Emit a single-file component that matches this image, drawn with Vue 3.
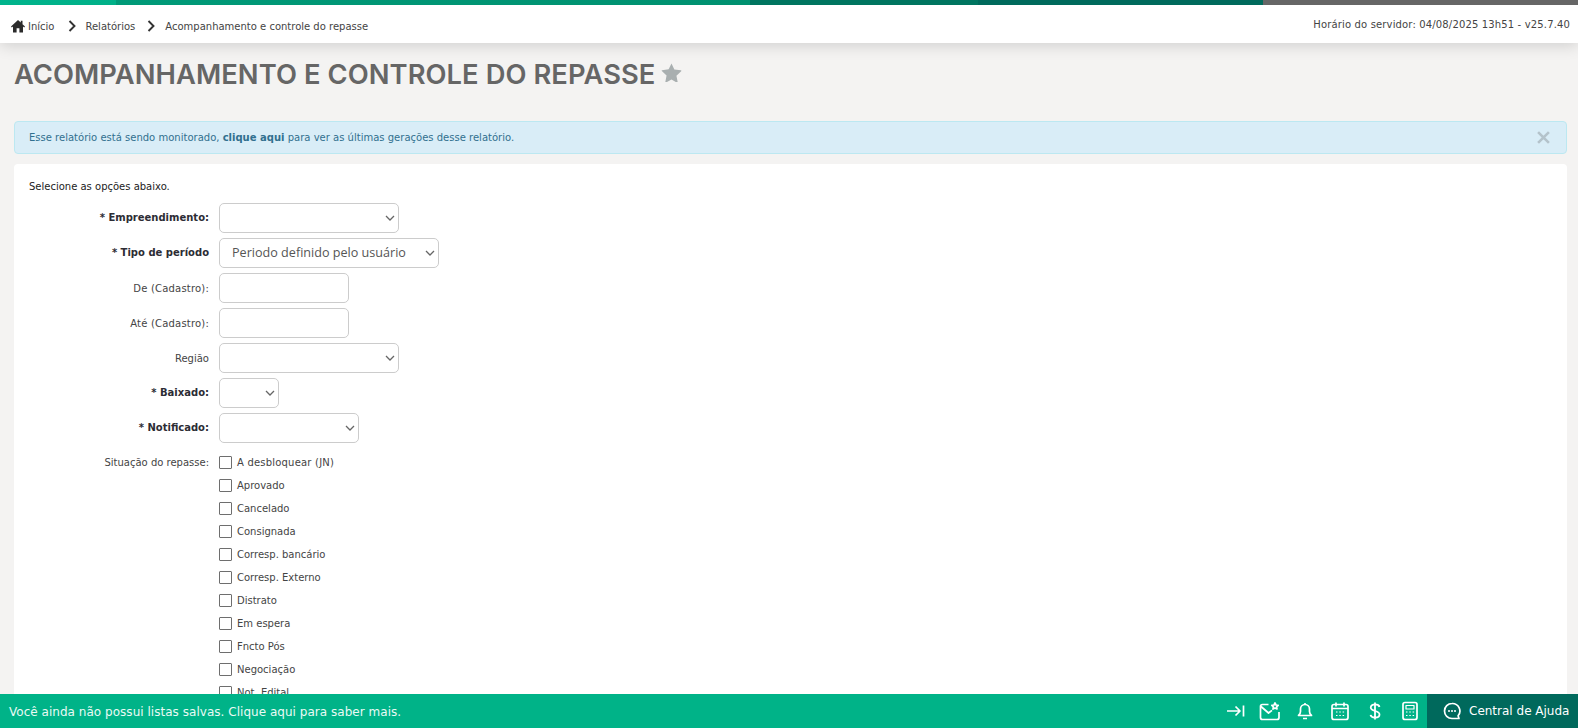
<script setup>
const fields = [
  { label: 'Empreendimento:', req: true, type: 'select', size: 'w180' },
  { label: 'Tipo de período', req: true, type: 'select', size: 'w220', value: 'Periodo definido pelo usuário' },
  { label: 'De (Cadastro):', type: 'input', size: 'w130', wide: true },
  { label: 'Até (Cadastro):', type: 'input', size: 'w130', wide: true },
  { label: 'Região', type: 'select', size: 'w180' },
  { label: 'Baixado:', req: true, type: 'select', size: 'w60' },
  { label: 'Notificado:', req: true, type: 'select', size: 'w140' },
]
const situations = ['A desbloquear (JN)', 'Aprovado', 'Cancelado', 'Consignada', 'Corresp. bancário', 'Corresp. Externo', 'Distrato', 'Em espera', 'Fncto Pós', 'Negociação', 'Not. Edital']
</script>

<template>
  <div class="app">
    <div class="strip">
      <span class="s1"></span><span class="s2"></span><span class="s3"></span><span class="s4"></span><span class="s5"></span>
    </div>
    <header class="topbar">
      <nav class="crumbs">
        <svg class="home" viewBox="0 0 14 14" width="14" height="14"><path d="M7 1 0 7.600l.8.900L2 7.400V13.500h3.600V9.200h2.800v4.300H12V7.400l1.200 1.100.8-.9L11.500 5.200V1.800H9.800v1.800L7 1Z" fill="#2b2b2b"/></svg>
        <span>Início</span>
        <svg class="chev chev-a" viewBox="0 0 8 12" width="8" height="12"><path d="M1.500 1 6.500 6l-5 5" fill="none" stroke="#333" stroke-width="1.900"/></svg>
        <span>Relatórios</span>
        <svg class="chev chev-b" viewBox="0 0 8 12" width="8" height="12"><path d="M1.500 1 6.500 6l-5 5" fill="none" stroke="#333" stroke-width="1.900"/></svg>
        <span>Acompanhamento e controle do repasse</span>
      </nav>
      <div class="server">Horário do servidor: 04/08/2025 13h51 - v25.7.40</div>
    </header>

    <main class="page">
      <div class="title-row">
        <h1>ACOMPANHAMENTO E CONTROLE DO REPASSE</h1>
        <svg class="star" viewBox="0 0 22 20" width="21" height="19"><path d="M11 .5l3 6.300 6.900.9c.5.100.7.600.3 1l-5 4.700 1.300 6.700c.1.500-.4.800-.8.600L11 17.400l-5.700 3.100c-.4.200-.9-.1-.8-.6l1.300-6.700-5-4.700c-.4-.4-.2-.9.300-1l6.900-.9L11 .5Z" fill="#a9afb0"/></svg>
      </div>

      <div class="alert">
        <span>Esse relatório está sendo monitorado, <b>clique aqui</b> para ver as últimas gerações desse relatório.</span>
        <svg class="close" viewBox="0 0 12 12" width="13" height="13"><path d="M1 1l10 10M11 1 1 11" stroke="#b4c3cb" stroke-width="2.400" fill="none"/></svg>
      </div>

      <section class="card">
        <p class="intro">Selecione as opções abaixo.</p>
        <div class="form">
          <div v-for="f in fields" :key="f.label" class="row">
            <label class="lbl" :class="{ req: f.req, wide: f.wide }">{{ f.req ? '* ' : '' }}{{ f.label }}</label>
            <div v-if="f.type === 'select'" class="sel" :class="f.size">
              <select class="ctl">
                <option>{{ f.value || '' }}</option>
              </select>
              <svg class="arrow" viewBox="0 0 10 6" width="10" height="6"><path d="M1 1l4 4 4-4" fill="none" stroke="#666" stroke-width="1.300"/></svg>
            </div>
            <input v-else class="ctl" :class="f.size" type="text" />
          </div>
          <div class="row checks-row">
            <label class="lbl">Situação do repasse:</label>
            <div class="checks">
              <label v-for="(s, i) in situations" :key="s" class="check" :class="{ wide: i === 0 }">
                <input type="checkbox" />
                <span>{{ s }}</span>
              </label>
            </div>
          </div>
        </div>
      </section>
    </main>

    <footer class="footer">
      <div class="foot-msg">Você ainda não possui listas salvas. Clique aqui para saber mais.</div>
      <div class="foot-icons">
        <span class="fi">
          <svg viewBox="0 0 20 20" width="20" height="20"><path d="M2 10h13M10.500 5.500 15 10l-4.500 4.500M18.500 4.500v11" /></svg>
        </span>
        <span class="fi">
          <svg viewBox="0 0 22 20" width="22" height="20"><path d="M9.500 3.500H3.500a2 2 0 0 0-2 2V16.500a2 2 0 0 0 2 2H18a2 2 0 0 0 2-2V11M2 5.500l7.500 6.500 3.500-2.700" /><path d="M16 2l1 2 2.200.3-1.600 1.500.4 2.200-2-1-2 1 .4-2.200-1.600-1.500L15 4l1-2Z" /></svg>
        </span>
        <span class="fi">
          <svg viewBox="0 0 20 20" width="20" height="20"><path d="M3.500 14.500h13c-1.200-1-2-2.300-2-4V8a4.500 4.500 0 0 0-9 0v2.500c0 1.700-.8 3-2 4ZM8 17.500h4M10 3.500V2" /></svg>
        </span>
        <span class="fi">
          <svg viewBox="0 0 20 20" width="20" height="20"><rect x="2" y="3.500" width="16" height="15" rx="2" /><path d="M2 7.500h16M6 1.500v4M14 1.500v4" /><path d="M6 11h1.500M9.300 11h1.500M12.600 11h1.500M6 14.500h1.500M9.300 14.500h1.500M12.600 14.500h1.500" stroke-width="1.200" /></svg>
        </span>
        <span class="fi">
          <svg class="dollar" viewBox="0 0 14 22" width="12" height="18"><path d="M12.500 6c-.5-2-2.500-3-5.500-3C4 3 1.800 4.500 1.800 6.800c0 5.400 10.700 3 10.700 8.400 0 2.300-2.300 3.800-5.500 3.800-3 0-5-1.200-5.500-3.300M7 .5v21" /></svg>
        </span>
        <span class="fi">
          <svg viewBox="0 0 18 20" width="18" height="20"><rect x="2" y="1.500" width="14" height="17" rx="2" /><rect x="5" y="4.500" width="8" height="3.500" stroke-width="1.200" /><path d="M5 11h1.500M8.300 11h1.500M11.600 11h1.500M5 14.500h1.500M8.300 14.500h1.500M11.600 14.500h1.500" stroke-width="1.200" /></svg>
        </span>
      </div>
      <div class="help">
        <svg class="chat" viewBox="0 0 20 20" width="20" height="20"><path d="M10 2.500a7.500 7.500 0 1 0 0 15h7l-.9-2.700A7.500 7.500 0 0 0 10 2.500Z" /><path d="M7 10h.01M10 10h.01M13 10h.01" stroke-width="2" stroke-linecap="round" /></svg>
        <span>Central de Ajuda</span>
      </div>
    </footer>
  </div>
</template>

<style>
html, body { margin: 0; height: 100%; overflow: hidden; background: #f4f3f2; }
</style>

<style scoped>
.app {
  height: 728px;
  overflow: hidden;
  font-family: "DejaVu Sans", Verdana, sans-serif;
  font-size: 10px;
  color: #333;
}
.strip { display: flex; height: 5px; position: relative; z-index: 3; }
.strip span { display: block; }
.s1 { width: 116px; background: linear-gradient(90deg, #00b48c, #00b088); }
.s2 { width: 634px; background: linear-gradient(90deg, #009a78, #009170); }
.s3 { width: 228px; background: #007560; }
.s4 { width: 285px; background: #006a5c; }
.s5 { flex: 1; background: #666; }

.topbar {
  position: relative;
  z-index: 2;
  height: 38px;
  background: #fff;
  display: flex;
  align-items: center;
  justify-content: space-between;
  padding: 0 8px 0 11px;
  box-shadow: 0 2px 16px rgba(0, 0, 0, .16);
}
.crumbs { display: flex; align-items: center; color: #444; padding-top: 4px; }
.home { margin-right: 3px; margin-top: -1px; }
.chev { margin-top: -1px; }
.chev-a { margin-left: 14px; margin-right: 9px; }
.chev-b { margin-left: 12px; margin-right: 10px; }
.server { color: #444; letter-spacing: .15px; }

.page { padding: 0 11px 0 14px; }
.title-row { display: flex; align-items: center; height: 60px; padding-top: 2px; margin-bottom: 16px; }
h1 {
  margin: 0;
  font-family: Inter, "Liberation Sans", sans-serif;
  font-weight: 600;
  font-size: 27.3px;
  letter-spacing: .08px;
  line-height: 1;
  color: #666;
  padding-bottom: 1px;
}
.star { margin-left: 6px; margin-bottom: 5px; }

.alert {
  box-sizing: border-box;
  height: 33px;
  display: flex;
  align-items: center;
  justify-content: space-between;
  padding: 0 16px 0 14px;
  background: #d9edf7;
  border: 1px solid #bce8f1;
  border-radius: 4px;
  color: #31708f;
  letter-spacing: .01px;
}
.alert b { font-weight: 700; }

.card {
  margin-top: 10px;
  background: #fff;
  border-radius: 4px;
  padding: 16px 15px 0;
  height: 600px;
}
.intro { margin: 0 0 10px; color: #222; line-height: 13px; }

.form { display: flex; flex-direction: column; gap: 5px; }
.row { display: flex; align-items: center; }
.lbl { width: 180px; margin-right: 10px; text-align: right; color: #444; flex: none; }
.lbl.req { font-weight: 700; color: #2c2c34; padding-bottom: 2px; }
.wide { letter-spacing: .2px; }
.sel { position: relative; height: 30px; }
.arrow { position: absolute; right: 4px; top: 12px; pointer-events: none; }
.sel .ctl { width: 100%; appearance: none; padding-bottom: 2px; }
.ctl {
  box-sizing: border-box;
  height: 30px;
  border: 1px solid #ccc;
  border-radius: 5px;
  background: #fff;
  font-family: "Open Sans", "Liberation Sans", sans-serif;
  font-size: 12.6px;
  color: #555;
  padding: 0 12px;
  outline: none;
}
.w180 { width: 180px; }
.w220 { width: 220px; }
.w130 { width: 130px; }
.w60 { width: 60px; }
.w140 { width: 140px; }

.checks-row { align-items: flex-start; margin-top: 3px; }
.checks-row .lbl { line-height: 23px; }
.checks { display: flex; flex-direction: column; }
.check { display: flex; align-items: center; height: 23px; color: #444; }
.check input {
  appearance: none;
  box-sizing: border-box;
  width: 13px;
  height: 13px;
  margin: 0 5px 0 0;
  border: 1px solid #6e6e6e;
  border-radius: 1px;
  background: #fff;
}

.footer {
  position: fixed;
  left: 0;
  right: 0;
  bottom: 0;
  height: 34px;
  background: #00b388;
  color: #fff;
  display: flex;
  align-items: center;
  z-index: 5;
}
.foot-msg { flex: 1; padding: 1px 0 0 9px; font-size: 12px; color: #eafaf5; letter-spacing: .03px; }
.foot-icons { display: flex; align-items: center; }
.fi { width: 35px; height: 34px; display: flex; align-items: center; justify-content: center; }
.footer svg { fill: none; stroke: #fff; stroke-width: 1.700; stroke-linejoin: round; }
.footer .dollar { stroke-width: 2.200; }
.help {
  width: 151px;
  height: 34px;
  box-sizing: border-box;
  background: #00695c;
  display: flex;
  align-items: center;
  padding-left: 15px;
  gap: 7px;
  font-size: 12px;
}
</style>
